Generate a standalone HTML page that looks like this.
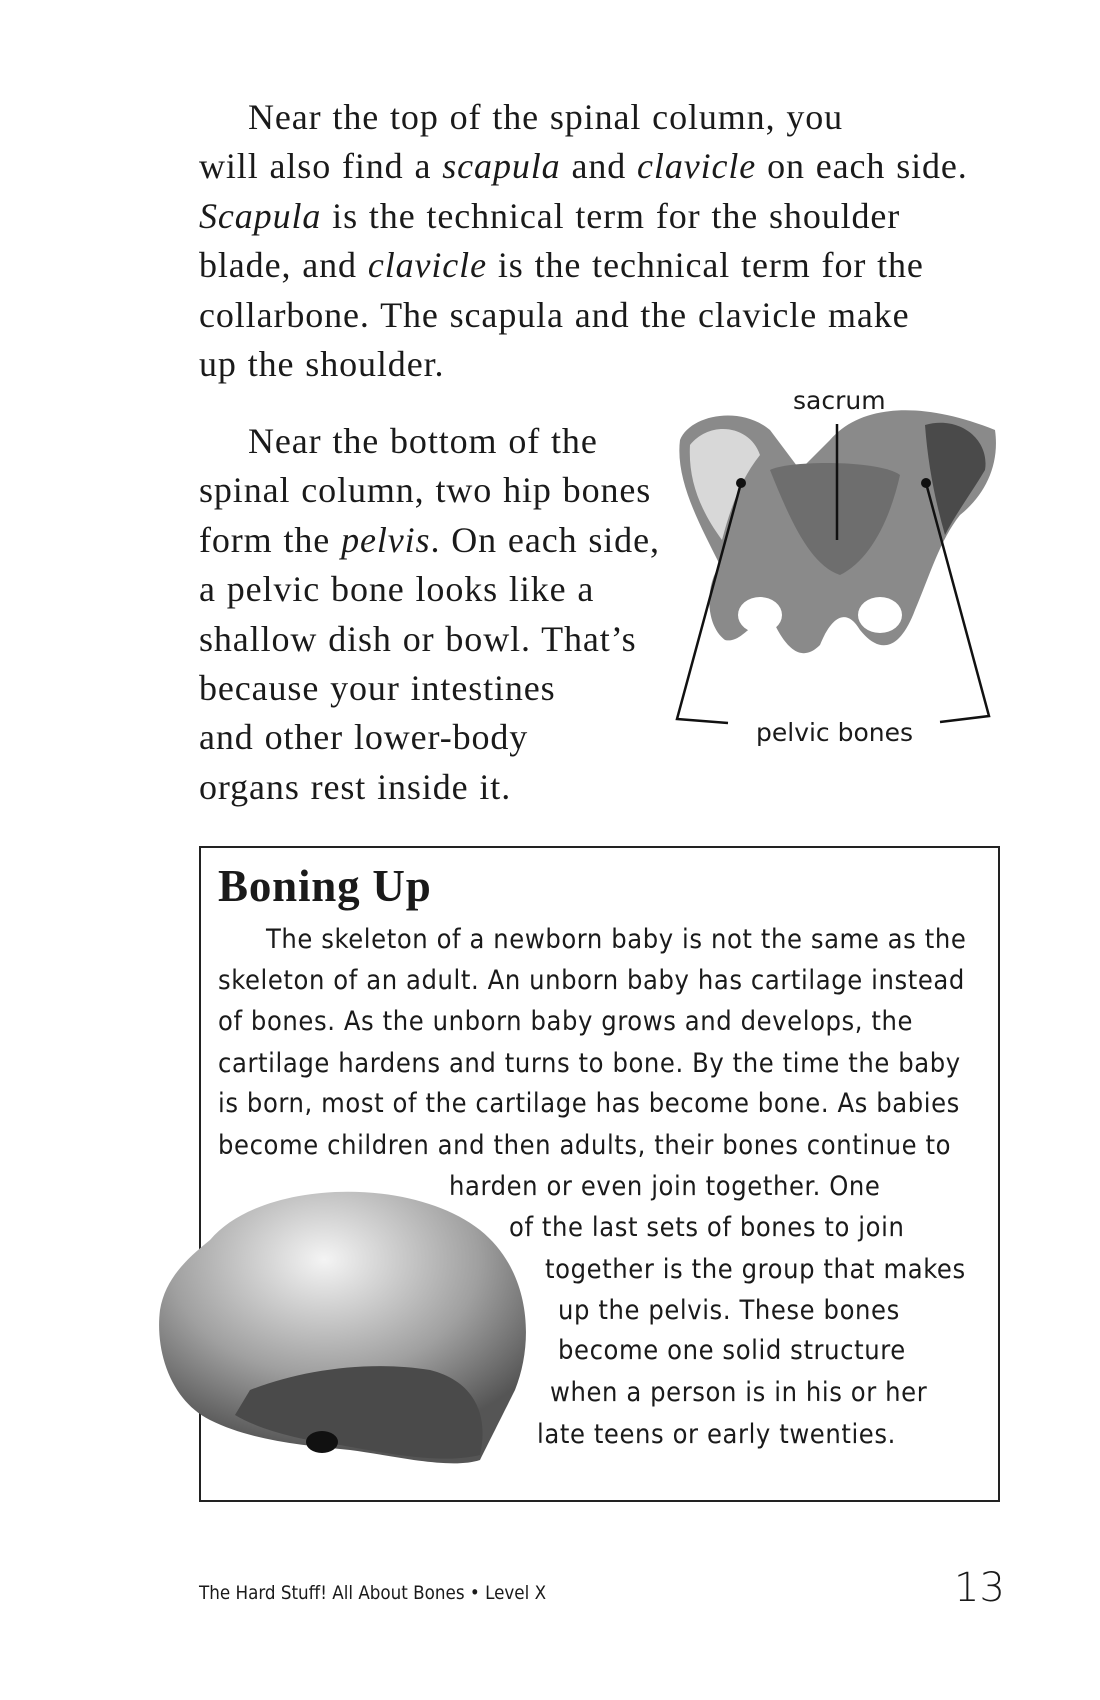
<!DOCTYPE html>
<html><head><meta charset="utf-8"><style>
body{margin:0;background:#fff;}
#p{position:relative;width:1100px;height:1700px;overflow:hidden;background:#fff;color:#1a1a1a;}
.s{position:absolute;font-family:"Liberation Serif",serif;font-size:36px;line-height:40px;white-space:nowrap;letter-spacing:0.9px;word-spacing:1px;}
.a{position:absolute;font-family:"DejaVu Sans Condensed","Liberation Sans",sans-serif;font-size:27px;line-height:40px;white-space:nowrap;letter-spacing:0.6px;}
.l{position:absolute;font-family:"DejaVu Sans","Liberation Sans",sans-serif;font-size:25px;white-space:nowrap;}
</style></head><body><div id="p">
<div class="s" style="left:248px;top:97px">Near the top of the spinal column, you</div>
<div class="s" style="left:199px;top:146px">will also find a <i>scapula</i> and <i>clavicle</i> on each side.</div>
<div class="s" style="left:199px;top:196px"><i>Scapula</i> is the technical term for the shoulder</div>
<div class="s" style="left:199px;top:245px">blade, and <i>clavicle</i> is the technical term for the</div>
<div class="s" style="left:199px;top:295px">collarbone. The scapula and the clavicle make</div>
<div class="s" style="left:199px;top:344px">up the shoulder.</div>
<div class="s" style="left:248px;top:421px">Near the bottom of the</div>
<div class="s" style="left:199px;top:470px">spinal column, two hip bones</div>
<div class="s" style="left:199px;top:520px">form the <i>pelvis</i>. On each side,</div>
<div class="s" style="left:199px;top:569px">a pelvic bone looks like a</div>
<div class="s" style="left:199px;top:619px">shallow dish or bowl. That’s</div>
<div class="s" style="left:199px;top:668px">because your intestines</div>
<div class="s" style="left:199px;top:717px">and other lower-body</div>
<div class="s" style="left:199px;top:767px">organs rest inside it.</div>

<div class="l" style="left:793px;top:386px">sacrum</div>
<div class="l" style="left:756px;top:718px">pelvic bones</div>
<svg style="position:absolute;left:0;top:0" width="1100" height="800">
<path d="M680 440 C690 415 740 405 770 430 L800 470 L830 440 C860 405 920 400 995 430 C1000 465 985 495 960 515 C940 540 930 575 915 610 C900 650 880 655 860 630 C845 605 830 620 820 645 C805 660 790 655 775 625 C760 605 745 645 725 640 C705 625 705 585 720 565 C700 525 675 480 680 440 Z" fill="#8a8a8a"/>
<path d="M690 445 C710 420 750 425 760 455 C740 480 730 510 722 540 C700 510 688 480 690 445Z" fill="#d8d8d8"/>
<path d="M925 425 C960 415 990 440 985 470 C970 495 955 515 945 535 C935 500 928 465 925 425Z" fill="#4a4a4a"/>
<path d="M770 470 C790 460 880 460 900 475 C890 520 870 560 840 575 C810 565 790 520 770 470Z" fill="#6e6e6e"/>
<ellipse cx="760" cy="615" rx="22" ry="18" fill="#fff"/>
<ellipse cx="880" cy="615" rx="22" ry="18" fill="#fff"/>
<line x1="837" y1="424" x2="837" y2="540" stroke="#111" stroke-width="2.5"/>
<circle cx="741" cy="483" r="5" fill="#111"/><circle cx="926" cy="483" r="5" fill="#111"/>
<polyline points="741,483 677,719 728,723" fill="none" stroke="#111" stroke-width="2.5"/>
<polyline points="926,483 989,716 940,722" fill="none" stroke="#111" stroke-width="2.5"/>
</svg>

<div style="position:absolute;left:199px;top:846px;width:797px;height:652px;border:2px solid #222;"></div>
<div style="position:absolute;left:218px;top:861px;font-family:'Liberation Serif',serif;font-weight:bold;font-size:45px;line-height:50px;letter-spacing:0.8px;">Boning Up</div>
<div class="a" style="left:266px;top:920px">The skeleton of a newborn baby is not the same as the</div>
<div class="a" style="left:218px;top:961px">skeleton of an adult. An unborn baby has cartilage instead</div>
<div class="a" style="left:218px;top:1002px">of bones. As the unborn baby grows and develops, the</div>
<div class="a" style="left:218px;top:1044px">cartilage hardens and turns to bone. By the time the baby</div>
<div class="a" style="left:218px;top:1084px">is born, most of the cartilage has become bone. As babies</div>
<div class="a" style="left:218px;top:1126px">become children and then adults, their bones continue to</div>
<div class="a" style="left:449px;top:1167px">harden or even join together. One</div>
<div class="a" style="left:509px;top:1208px">of the last sets of bones to join</div>
<div class="a" style="left:545px;top:1250px">together is the group that makes</div>
<div class="a" style="left:558px;top:1291px">up the pelvis. These bones</div>
<div class="a" style="left:558px;top:1331px">become one solid structure</div>
<div class="a" style="left:550px;top:1373px">when a person is in his or her</div>
<div class="a" style="left:537px;top:1415px">late teens or early twenties.</div>
<svg style="position:absolute;left:150px;top:1170px" width="390" height="305">
<defs><radialGradient id="g" cx="0.45" cy="0.25" r="0.7"><stop offset="0" stop-color="#f4f4f4"/><stop offset="0.6" stop-color="#a0a0a0"/><stop offset="1" stop-color="#555"/></radialGradient></defs>
<path d="M60 70 C110 10 260 5 330 60 C380 100 385 170 365 220 C350 250 340 270 330 290 C300 300 240 285 200 280 C150 275 100 270 60 250 C20 230 5 180 10 140 C15 110 35 90 60 70Z" fill="url(#g)"/>
<path d="M100 220 C150 200 220 190 280 200 C320 210 340 240 330 285 C290 295 230 282 190 275 C150 270 110 260 85 245Z" fill="#4a4a4a"/>
<ellipse cx="172" cy="272" rx="16" ry="11" fill="#111"/>
</svg>

<div style="position:absolute;left:199px;top:1582px;font-family:'DejaVu Sans Condensed','Liberation Sans Narrow',sans-serif;font-size:19px;transform:scaleX(0.98);transform-origin:left;white-space:nowrap;">The Hard Stuff! All About Bones • Level X</div>
<div style="position:absolute;left:954px;top:1565px;font-family:'DejaVu Sans','Liberation Sans',sans-serif;font-size:40px;font-weight:300;">13</div>
</div></body></html>
